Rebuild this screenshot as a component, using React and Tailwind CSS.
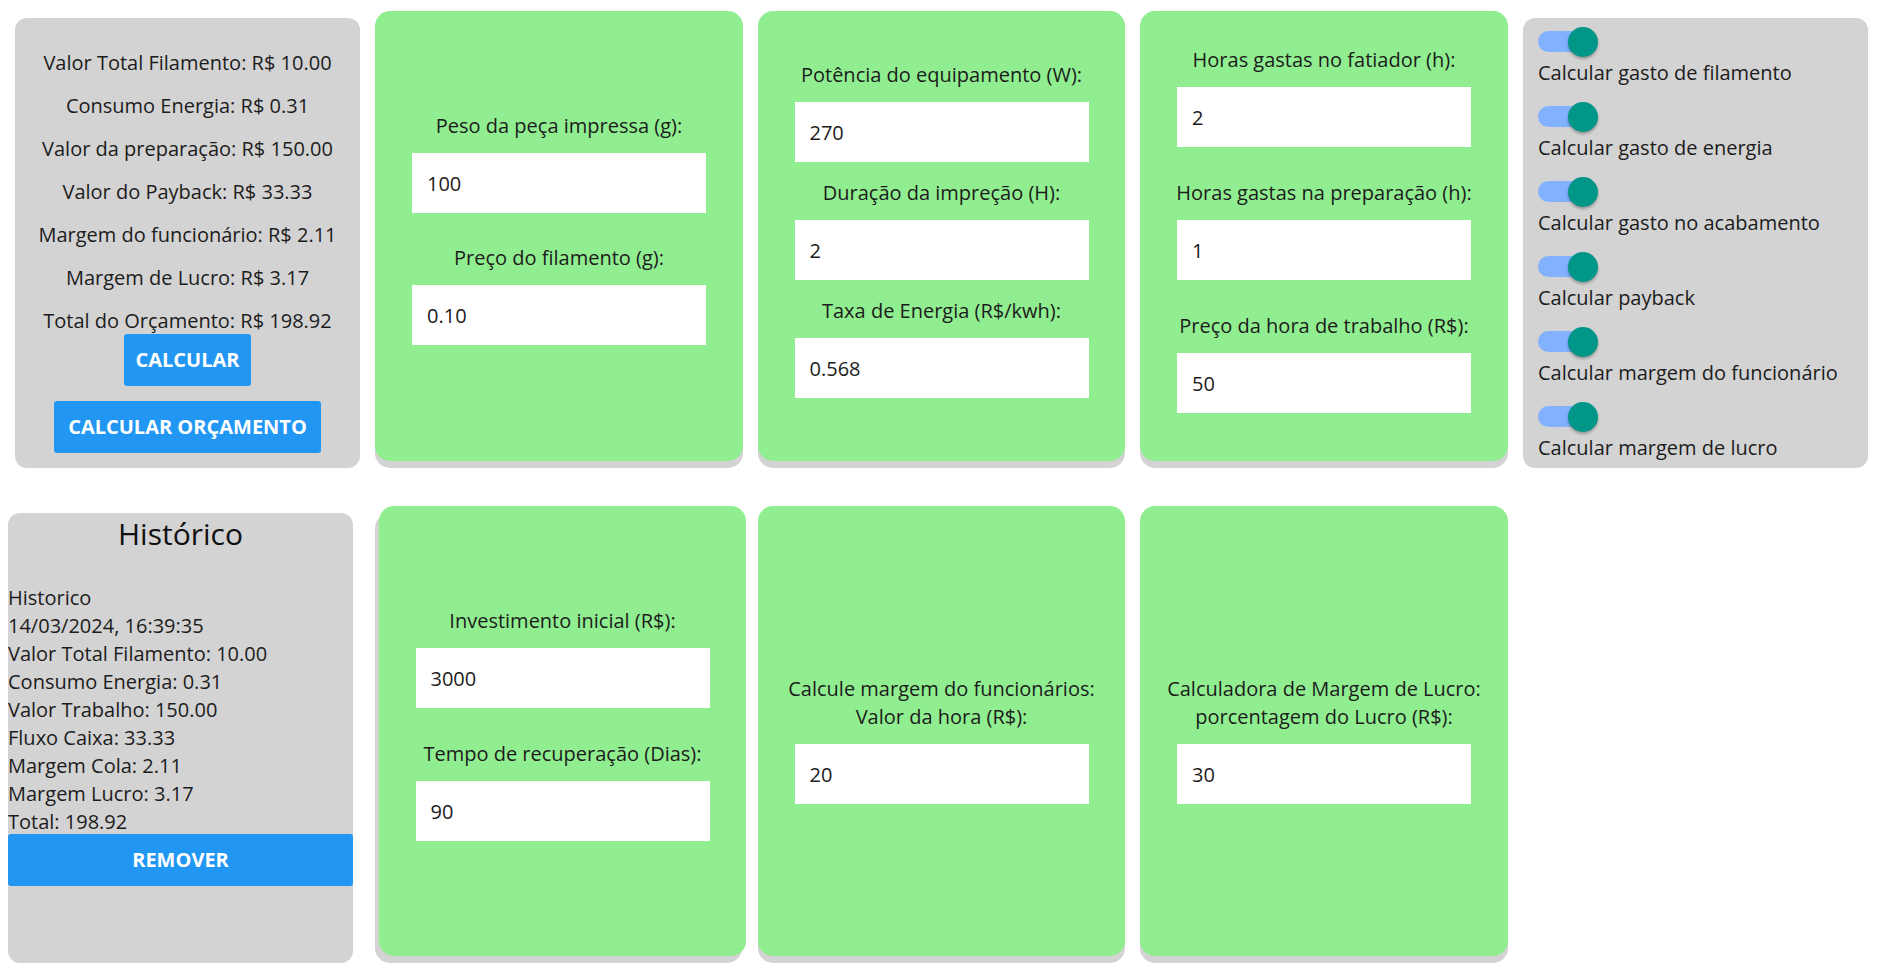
const font = { fontFamily: '"Segoe UI", "Open Sans", sans-serif' }

const Field = ({ label, value, labelClass = '', inputClass = 'mt-[13px]' }) => (
  <>
    <div className={`leading-[28px] text-center text-[#1c1c1c] ${labelClass}`}>{label}</div>
    <input
      readOnly
      value={value}
      className={`block w-[294px] h-[60px] bg-white px-[15px] text-[20px] text-[#1c1c1c] outline-none ${inputClass}`}
    />
  </>
)

const GreenCard = ({ children, className = '', shadow = 'shadow-[0_7px_0_#d3d3d3]' }) => (
  <div className={`-mt-[7px] h-[450px] rounded-[15px] bg-[#90ee90] flex flex-col items-center ${shadow} ${className}`}>
    {children}
  </div>
)

const Toggle = ({ label }) => (
  <div>
    <div className="relative h-[30px] w-[60px]">
      <div className="absolute left-0 top-[4px] h-[21px] w-[51px] rounded-full bg-[#82b1ff]" />
      <div className="absolute left-[30px] top-0 h-[30px] w-[30px] rounded-full bg-[#009688] shadow-[0_2px_3px_rgba(0,0,0,0.3)]" />
    </div>
    <div className="mt-[2px] leading-[28px] text-[#1c1c1c]">{label}</div>
  </div>
)

export default function App() {
  const resumo = [
    'Valor Total Filamento: R$ 10.00',
    'Consumo Energia: R$ 0.31',
    'Valor da preparação: R$ 150.00',
    'Valor do Payback: R$ 33.33',
    'Margem do funcionário: R$ 2.11',
    'Margem de Lucro: R$ 3.17',
    'Total do Orçamento: R$ 198.92',
  ]

  const historico = [
    'Historico',
    '14/03/2024, 16:39:35',
    'Valor Total Filamento: 10.00',
    'Consumo Energia: 0.31',
    'Valor Trabalho: 150.00',
    'Fluxo Caixa: 33.33',
    'Margem Cola: 2.11',
    'Margem Lucro: 3.17',
    'Total: 198.92',
  ]

  const toggles = [
    'Calcular gasto de filamento',
    'Calcular gasto de energia',
    'Calcular gasto no acabamento',
    'Calcular payback',
    'Calcular margem do funcionário',
    'Calcular margem de lucro',
  ]

  return (
    <div className="min-h-screen bg-white text-[20px]" style={font}>
      {/* linha de cima */}
      <div className="flex items-start pl-[15px] pt-[18px]">
        <div className="w-[345px] h-[450px] rounded-[12px] bg-[#d3d3d3] pt-[31px] flex flex-col items-center">
          {resumo.map((item, i) => (
            <div key={i} className={`leading-[28px] text-[#1c1c1c] ${i > 0 ? 'mt-[15px]' : ''}`}>{item}</div>
          ))}
          <button className="-mt-[1px] h-[52px] w-[127px] rounded-[3px] bg-[#2196f3] text-white font-bold">
            CALCULAR
          </button>
          <button className="mt-[15px] h-[52px] w-[267px] rounded-[3px] bg-[#2196f3] text-white font-bold">
            CALCULAR ORÇAMENTO
          </button>
        </div>

        <GreenCard className="ml-[15px] w-[368px] pt-[101px]">
          <Field label="Peso da peça impressa (g):" value="100" />
          <Field label="Preço do filamento (g):" value="0.10" labelClass="mt-[31px]" />
        </GreenCard>

        <GreenCard className="ml-[15px] w-[367px] pt-[50px]">
          <Field label="Potência do equipamento (W):" value="270" />
          <Field label="Duração da impreção (H):" value="2" labelClass="mt-[17px]" />
          <Field label="Taxa de Energia (R$/kwh):" value="0.568" labelClass="mt-[17px]" />
        </GreenCard>

        <GreenCard className="ml-[15px] w-[368px] pt-[35px]">
          <Field label="Horas gastas no fatiador (h):" value="2" />
          <Field label="Horas gastas na preparação (h):" value="1" labelClass="mt-[32px]" />
          <Field label="Preço da hora de trabalho (R$):" value="50" labelClass="mt-[32px]" />
        </GreenCard>

        <div className="ml-[15px] w-[345px] h-[450px] rounded-[12px] bg-[#d3d3d3] pt-[9px] pl-[15px] flex flex-col gap-[15px]">
          {toggles.map((t) => (
            <Toggle key={t} label={t} />
          ))}
        </div>
      </div>

      {/* linha de baixo */}
      <div className="flex items-start pl-[8px] mt-[45px]">
        <div className="w-[345px] h-[450px] rounded-[12px] bg-[#d3d3d3]">
          <h2 className="text-center text-[30px] leading-[41px] text-[#111]">Histórico</h2>
          <div className="mt-[30px]">
            {historico.map((h, i) => (
              <div key={i} className="leading-[28px] text-[#1c1c1c]">{h}</div>
            ))}
          </div>
          <button className="-mt-[2px] block h-[52px] w-full rounded-[3px] bg-[#2196f3] text-white font-bold">
            REMOVER
          </button>
        </div>

        <GreenCard className="ml-[26px] w-[367px] pt-[101px]" shadow="shadow-[-4px_7px_0_#d3d3d3]">
          <Field label="Investimento inicial (R$):" value="3000" />
          <Field label="Tempo de recuperação (Dias):" value="90" labelClass="mt-[32px]" />
        </GreenCard>

        <GreenCard className="ml-[12px] w-[367px] pt-[169px]">
          <Field
            label={<>Calcule margem do funcionários:<br />Valor da hora (R$):</>}
            value="20"
            inputClass="mt-[13px]"
          />
        </GreenCard>

        <GreenCard className="ml-[15px] w-[368px] pt-[169px]">
          <Field
            label={<>Calculadora de Margem de Lucro:<br />porcentagem do Lucro (R$):</>}
            value="30"
            inputClass="mt-[13px]"
          />
        </GreenCard>
      </div>
    </div>
  )
}
